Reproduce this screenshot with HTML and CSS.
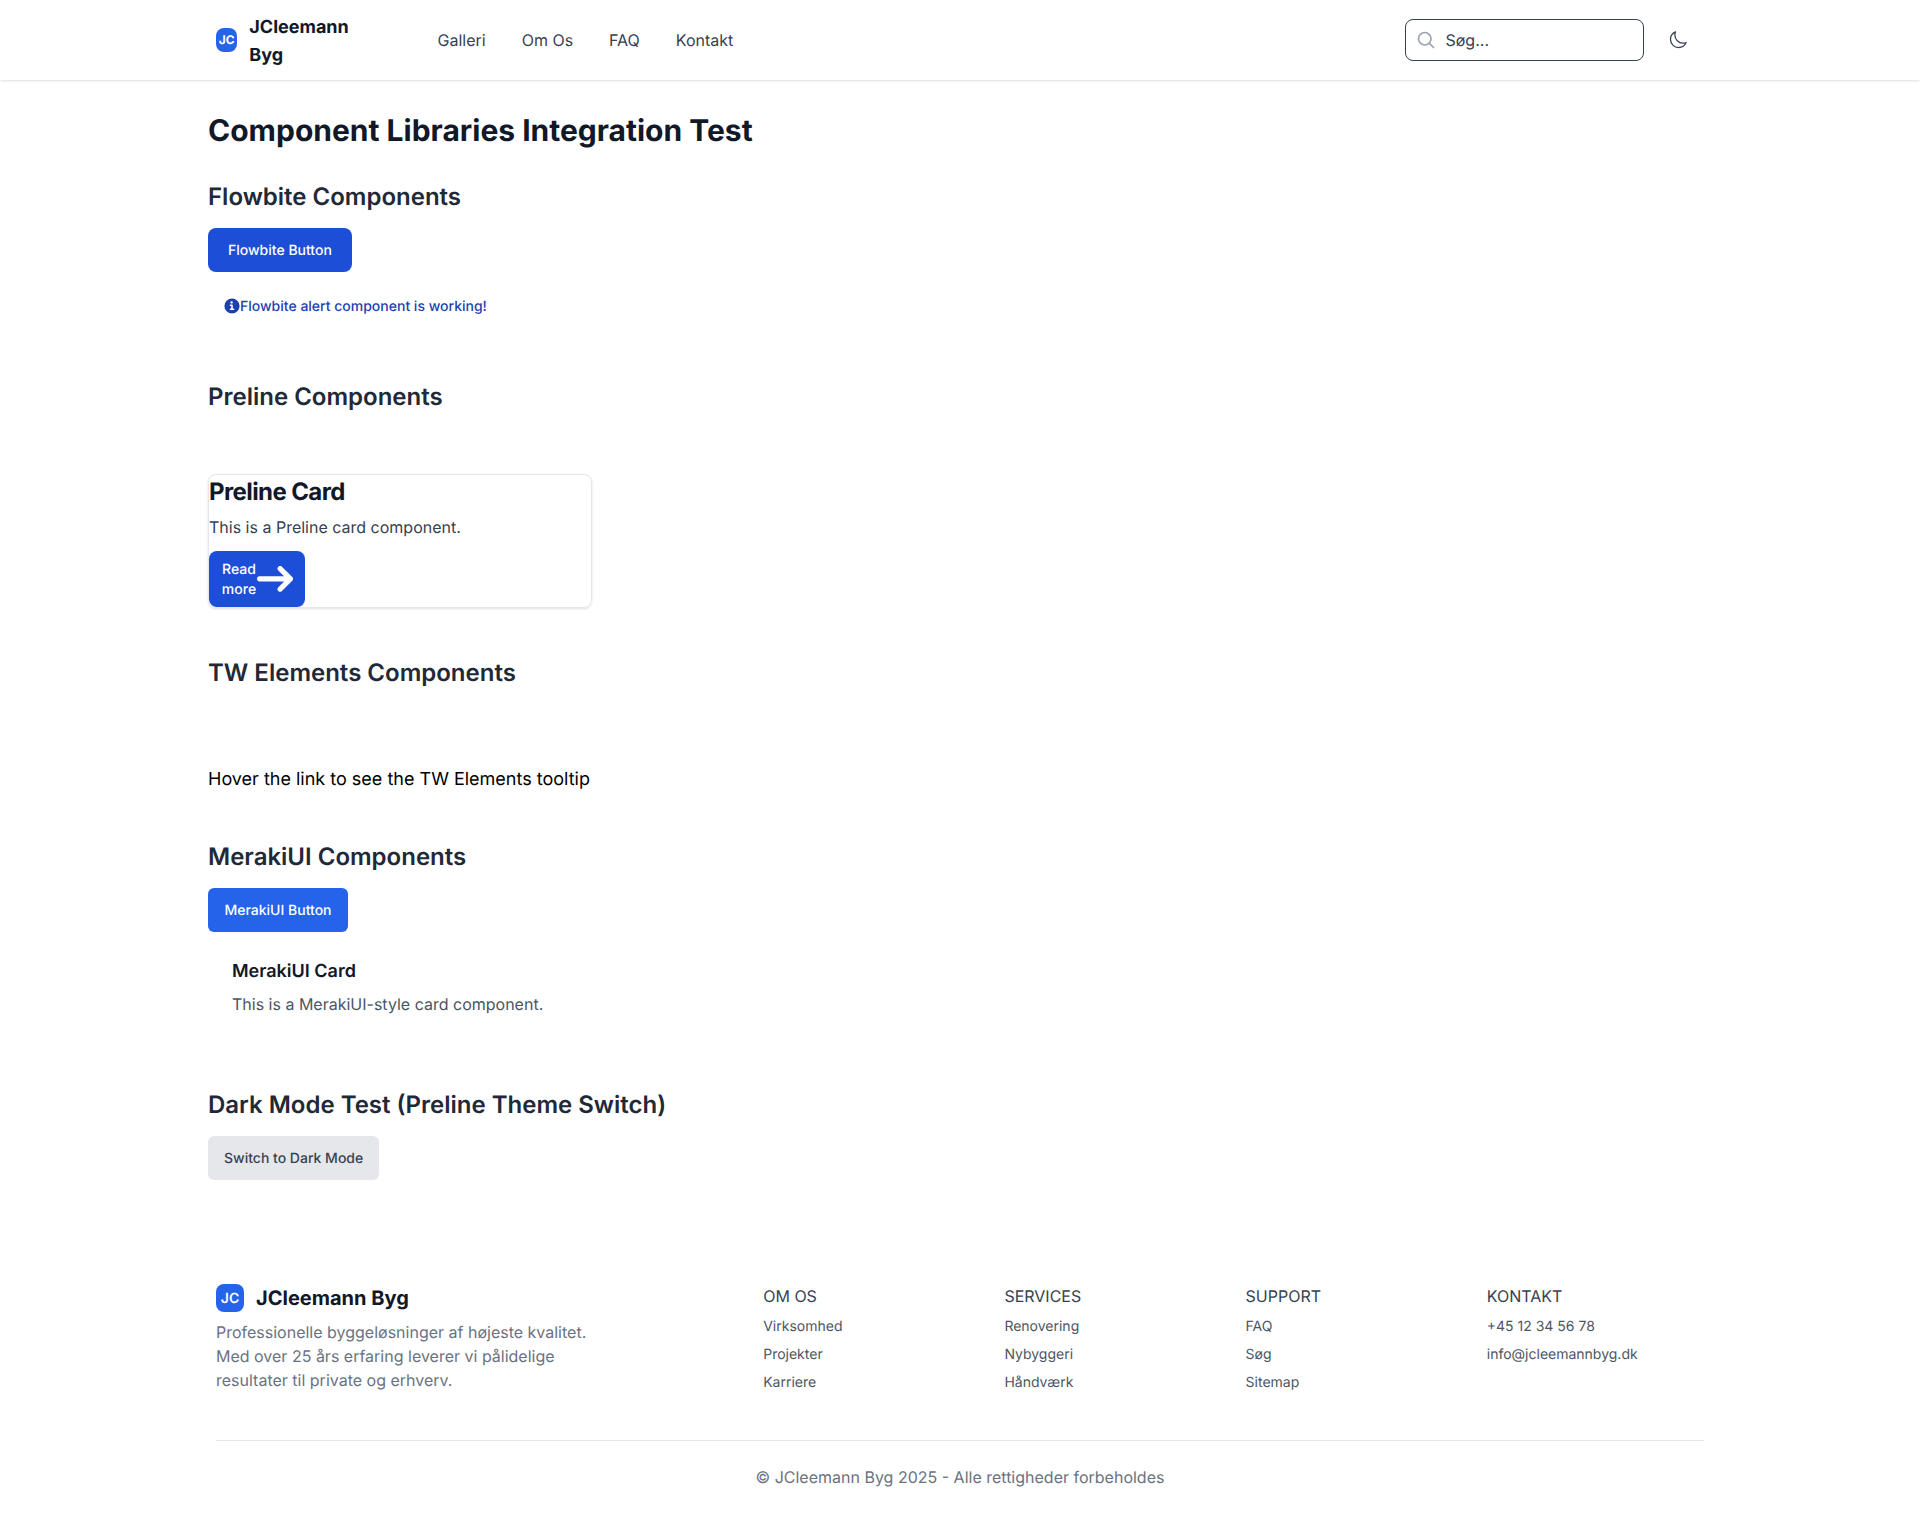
FILE: index.html
```html
<!DOCTYPE html>
<html lang="da">
<head>
<meta charset="utf-8">
<title>JCleemann Byg</title>
<link rel="stylesheet" href="styles.css">
</head>
<body>
<header class="header">
  <div class="header-inner">
    <a class="brand"><span class="logo logo-sm">JC</span><span class="brand-name">JCleemann<br>Byg</span></a>
    <nav class="nav"><a>Galleri</a><a>Om Os</a><a>FAQ</a><a>Kontakt</a></nav>
    <div class="search">
      <svg class="search-icon" viewBox="0 0 24 24" fill="none"><path d="m21 21-5.197-5.197m0 0A7.500 7.500 0 1 0 5.196 5.196a7.500 7.500 0 0 0 10.607 10.607Z" stroke="currentColor" stroke-width="2" stroke-linecap="round" stroke-linejoin="round"/></svg>
      <span>Søg...</span>
    </div>
    <svg class="moon" viewBox="0 0 24 24" fill="none"><path d="M21.752 15.002A9.72 9.72 0 0 1 18 15.75c-5.385 0-9.75-4.365-9.75-9.75 0-1.33.266-2.597.748-3.752A9.753 9.753 0 0 0 3 11.25C3 16.635 7.365 21 12.75 21a9.753 9.753 0 0 0 9.002-5.998Z" stroke="currentColor" stroke-width="1.5" stroke-linecap="round" stroke-linejoin="round"/></svg>
  </div>
</header>
<main class="main">
  <h1>Component Libraries Integration Test</h1>
  <section>
    <h2>Flowbite Components</h2>
    <button class="btn btn-flowbite">Flowbite Button</button>
    <div class="alert">
      <svg viewBox="0 0 20 20" fill="currentColor"><path d="M10 .5a9.5 9.5 0 1 0 9.5 9.5A9.510 9.510 0 0 0 10 .5ZM9.500 4a1.500 1.500 0 1 1 0 3 1.500 1.500 0 0 1 0-3ZM12 15H8a1 1 0 0 1 0-2h1v-3H8a1 1 0 0 1 0-2h2a1 1 0 0 1 1 1v4h1a1 1 0 0 1 0 2Z"/></svg>
      <span>Flowbite alert component is working!</span>
    </div>
  </section>
  <section>
    <h2>Preline Components</h2>
    <div class="card">
      <h3>Preline Card</h3>
      <p>This is a Preline card component.</p>
      <a class="read-more"><span>Read<br>more</span><svg viewBox="0 0 14 10" fill="none"><path d="M1 5h12m0 0L9 1m4 4L9 9" stroke="currentColor" stroke-width="2" stroke-linecap="round" stroke-linejoin="round"/></svg></a>
    </div>
  </section>
  <section>
    <h2>TW Elements Components</h2>
    <p class="hover-text">Hover the link to see the TW Elements tooltip</p>
  </section>
  <section>
    <h2>MerakiUI Components</h2>
    <button class="btn btn-meraki">MerakiUI Button</button>
    <div class="meraki-card">
      <h3>MerakiUI Card</h3>
      <p>This is a MerakiUI-style card component.</p>
    </div>
  </section>
  <section>
    <h2>Dark Mode Test (Preline Theme Switch)</h2>
    <button class="btn btn-gray">Switch to Dark Mode</button>
  </section>
</main>
<footer class="footer">
  <div class="footer-top">
    <div class="about">
      <div class="footer-brand"><span class="logo logo-lg">JC</span><span>JCleemann Byg</span></div>
      <p>Professionelle byggeløsninger af højeste kvalitet.<br>Med over 25 års erfaring leverer vi pålidelige<br>resultater til private og erhverv.</p>
    </div>
    <div class="col"><h4>OM OS</h4><a>Virksomhed</a><a>Projekter</a><a>Karriere</a></div>
    <div class="col"><h4>SERVICES</h4><a>Renovering</a><a>Nybyggeri</a><a>Håndværk</a></div>
    <div class="col"><h4>SUPPORT</h4><a>FAQ</a><a>Søg</a><a>Sitemap</a></div>
    <div class="col"><h4>KONTAKT</h4><a>+45 12 34 56 78</a><a>info@jcleemannbyg.dk</a></div>
  </div>
  <p class="copyright">© JCleemann Byg 2025 - Alle rettigheder forbeholdes</p>
</footer>
</body>
</html>
```
FILE: styles.css
```css
* { box-sizing: border-box; margin: 0; padding: 0; }
body { font-family: Inter, "Liberation Sans", sans-serif; font-size: 16px; line-height: 24px; color: #000; background: #fff; text-rendering: geometricPrecision; }
svg { display: block; flex: none; }
h1, h2, h3, h4 { font-weight: 600; }

.header { height: 80px; box-shadow: 0 1px 3px rgba(0,0,0,.1), 0 1px 2px -1px rgba(0,0,0,.1); color: #374151; }
.header-inner { width: 1488px; height: 80px; margin: 0 auto; display: flex; align-items: center; }
.brand { display: flex; align-items: center; gap: 12px; width: 221.500px; }
.brand-name { font-size: 18px; font-weight: 700; line-height: 28px; color: #111827; padding-top: 4px; }
.logo { display: flex; align-items: center; justify-content: center; flex: none; background: #2563eb; color: #fff; border-radius: 8px; }
.logo-sm { width: 21.300px; height: 24px; font-size: 12px; font-weight: 700; }
.logo-lg { width: 28px; height: 28px; font-size: 14px; font-weight: 600; padding-top: 2px; }
.nav { display: flex; gap: 36px; }
.search { margin-left: auto; width: 239.500px; height: 42px; border: 1px solid #374151; border-radius: 8px; display: flex; align-items: center; gap: 9.500px; padding-left: 10.500px; }
.search-icon { width: 20px; height: 20px; color: #9ca3af; }
.moon { width: 20px; height: 20px; margin: 0 16px 0 24px; }

.main { width: 1504px; margin: 0 auto; padding-top: 32px; }
h1 { font-size: 30px; line-height: 36px; font-weight: 700; color: #111827; padding-top: 1px; margin-bottom: 31px; }
h2 { font-size: 24px; line-height: 32px; color: #1f2937; padding-top: 1px; margin-bottom: 15px; }
section { margin-bottom: 48px; }
.btn { display: block; height: 44px; border: 0; font: 500 14px/20px Inter, "Liberation Sans", sans-serif; text-rendering: inherit; color: #fff; border-radius: 6px; padding: 2px 16px 0; }
.btn-flowbite { background: #1d4ed8; padding: 2px 20px 0; border-radius: 8px; }
.btn-meraki { width: 140px; background: #2563eb; }
.btn-gray { background: #e5e7eb; color: #374151; }
.alert { margin-top: 8px; padding: 15px 16px; display: flex; align-items: center; font-size: 14px; font-weight: 500; line-height: 20px; color: #1e40af; }
.alert svg { width: 16px; height: 16px; }
.alert span { padding-top: 2px; }
.card { width: 384px; height: 134px; margin-top: 61px; border: 1px solid #e5e7eb; border-radius: 8px; box-shadow: 0 1px 3px rgba(0,0,0,.1), 0 1px 2px -1px rgba(0,0,0,.1); }
.card h3 { font-size: 24px; line-height: 32px; font-weight: 700; letter-spacing: -.6px; color: #111827; padding-top: 1px; margin-bottom: 7px; }
.card p { color: #374151; margin-bottom: 12px; }
.read-more { display: flex; align-items: center; width: 96px; padding: 7px 12px; background: #1d4ed8; color: #fff; font-size: 14px; font-weight: 500; line-height: 20px; border-radius: 8px; text-align: center; }
.read-more span { width: 36px; padding-top: 2px; }
.read-more svg { width: 36px; }
.hover-text { font-size: 18px; line-height: 28px; padding-top: 62px; margin-bottom: -2px; }
.meraki-card { padding: 24px; }
.meraki-card h3 { font-size: 18px; line-height: 28px; color: #111827; padding-top: 2px; margin-bottom: 6px; }
.meraki-card p { color: #4b5563; }

.footer { width: 1488px; margin: 104px auto 0; }
.footer-top { display: flex; height: 157px; border-bottom: 1px solid #e5e7eb; }
.about { flex: none; width: 547.200px; color: #6b7280; }
.footer-brand { display: flex; align-items: center; gap: 12px; height: 28px; margin-bottom: 8px; font-size: 20px; font-weight: 700; color: #111827; }
.col { flex: none; width: 241.200px; display: flex; flex-direction: column; gap: 8px; font-size: 14px; line-height: 20px; color: #4b5563; }
.col:last-child { width: 217px; }
.col h4 { font-size: 16px; line-height: 24px; font-weight: 400; color: #374151; margin-bottom: 1px; }
.copyright { text-align: center; color: #6b7280; margin-top: 24px; }
```
